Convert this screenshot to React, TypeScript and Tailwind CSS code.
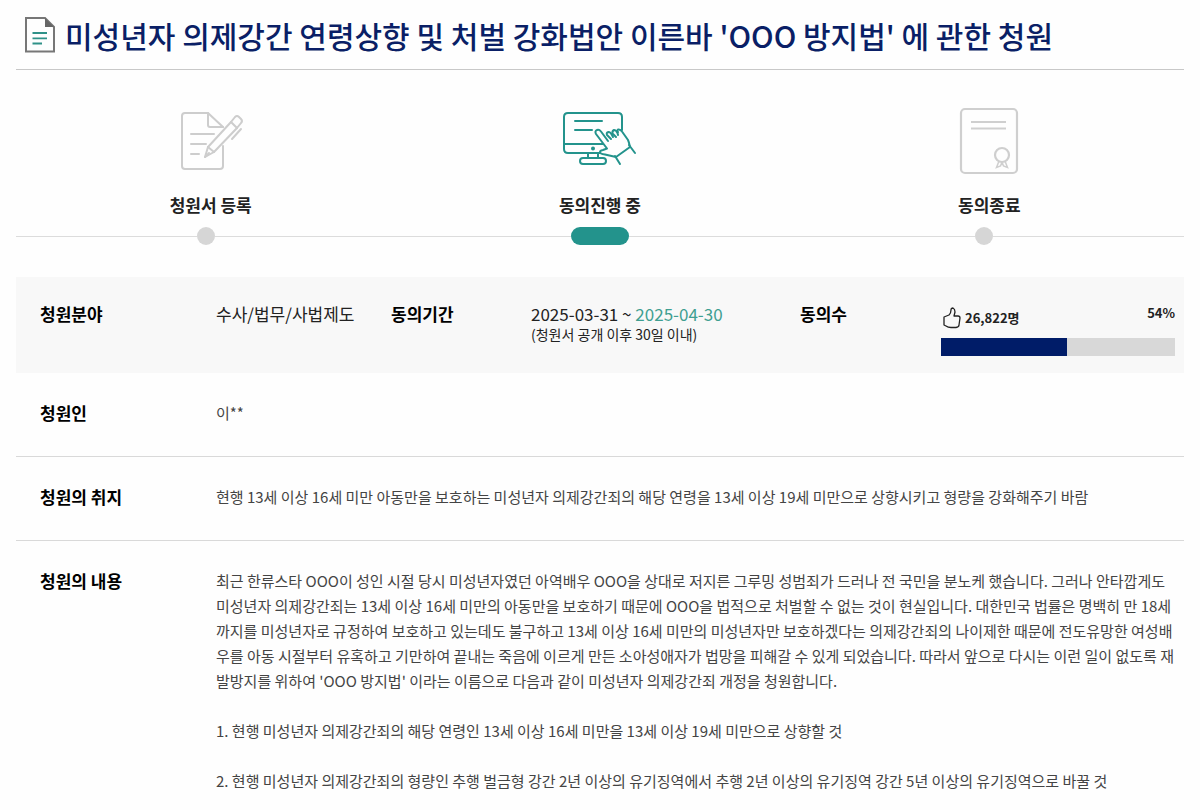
import type { ReactNode } from "react";

const PERCENT = 54;

function DocIcon() {
  return (
    <svg width="30" height="36" viewBox="0 0 30 36" fill="none" className="shrink-0" aria-hidden="true">
      <path d="M1 1H20L29 10V34.500H1Z" stroke="#777" strokeWidth="2" />
      <path d="M20 1L29 10H20Z" fill="#666" />
      <path d="M7.500 16H22M7.500 21.300H22M7.500 26.500H17" stroke="#2f9188" strokeWidth="1.800" />
    </svg>
  );
}

function WriteIcon() {
  return (
    <svg width="66" height="64" viewBox="0 0 66 64" fill="none" stroke="#cdcdcd" strokeWidth="2" strokeLinecap="round" strokeLinejoin="round" aria-hidden="true">
      <path d="M45 18L30 4H7Q4 4 4 7V57Q4 60 7 60H42Q45 60 45 57V37" />
      <path d="M30 4V16Q30 18 32 18H45" />
      <path d="M13 25H36M13 35H28M13 45H21" />
      <path d="M27 48L30 38L53 13L57 8Q59 6 61 8L63 10Q65 12 63 14L59 19L36 43Z" />
      <path d="M30 38L36 43M53 13L59 19M63 20L54 30M27 48L31 44" />
    </svg>
  );
}

function AgreeIcon() {
  return (
    <svg width="76" height="64" viewBox="0 0 76 64" fill="none" stroke="#23938c" strokeWidth="2" strokeLinecap="round" strokeLinejoin="round" aria-hidden="true">
      <path d="M38 44H6Q2 44 2 40V8Q2 4 6 4H56Q60 4 60 8V21" />
      <path d="M2 35H41M13 12H40M13 21H30" />
      <circle cx="31" cy="39.500" r="1" fill="#23938c" />
      <path d="M26 44V49M36 44V49" />
      <rect x="18" y="49" width="26" height="6" rx="3" />
      <path d="M54 48L43 45.500Q38 45 38 43Q38 41.500 41 41L45 39.500L34 25Q32.500 22 35 21Q37 20 39 22.500L46 32" />
      <path d="M49 30L45 26Q44 23.500 46.500 23Q48.500 23 50 26L51 28" />
      <path d="M54 28L50.500 24.500Q50 22 52 21Q54 21 55.500 24L56 26" />
      <path d="M56 23Q54.500 21.500 56 20.500Q58.500 20 60 22.500L66 31Q67 33 68 38L54 48" />
      <path d="M67 36L73 44M53 47L58 55" />
    </svg>
  );
}

function CertificateIcon() {
  return (
    <svg width="60" height="68" viewBox="0 0 60 68" fill="none" stroke="#cfcfcf" strokeWidth="2.200" aria-hidden="true">
      <rect x="2" y="2" width="56" height="64" rx="4" />
      <path d="M12 15H47M12 21.500H47" />
      <circle cx="43" cy="48" r="7" />
      <path d="M40 54L37.500 60.500L41.500 59L43 55M46 54L48.500 60.500L44.500 59L43 55" strokeWidth="1.500" />
    </svg>
  );
}

type StepProps = {
  label: string;
  icon: ReactNode;
  active?: boolean;
};

function Step({ label, icon, active }: StepProps) {
  return (
    <li className="flex flex-1 flex-col items-center">
      <div className="flex h-[70px] items-center justify-center">{icon}</div>
      <p className="mt-[17px] text-[17px] leading-6 font-semibold text-[#222]">{label}</p>
      <div className="mt-2.5 flex h-[18px] w-full items-center">
        <span className="h-px flex-1 bg-[#dcdcdc]" />
        {active ? (
          <span className="h-[18px] w-[58px] rounded-full bg-[#23938c]" />
        ) : (
          <>
            <span className="size-[18px] rounded-full bg-[#d6d6d6]" />
            <span className="h-px w-2.5 bg-[#dcdcdc]" />
          </>
        )}
        <span className="h-px flex-1 bg-[#dcdcdc]" />
      </div>
    </li>
  );
}

function Row({ label, children }: { label: string; children: ReactNode }) {
  return (
    <div className="grid grid-cols-[176px_1fr] border-b border-[#d9d9d9] pt-[27px] pr-2 pb-[31px] pl-6 last:border-b-0">
      <dt className="text-[17px] leading-[25px] font-semibold text-black">{label}</dt>
      <dd className="text-[15px] leading-[25px] text-[#444]">{children}</dd>
    </div>
  );
}

export default function App() {
  return (
    <main className="min-h-screen bg-[#fefefe] px-4 font-['Noto_Sans_CJK_KR','Noto_Sans_KR',sans-serif]">
      <header className="flex h-[70px] items-center gap-2.5 border-b border-[#c8c8c8] pl-[9px]">
        <DocIcon />
        <h1 className="text-3xl leading-10 font-medium text-[#0a1f66]">
          미성년자 의제강간 연령상향 및 처벌 강화법안 이른바 'OOO 방지법' 에 관한 청원
        </h1>
      </header>

      <ol className="flex pt-9">
        <Step label="청원서 등록" icon={<WriteIcon />} />
        <Step label="동의진행 중" icon={<AgreeIcon />} active />
        <Step label="동의종료" icon={<CertificateIcon />} />
      </ol>

      <dl className="mt-8 grid min-h-24 grid-cols-[176fr_175fr_140fr_269fr_141fr_234fr] bg-[#f8f8f8] pt-6 pr-[9px] pb-4 pl-6 text-[17px] leading-[25px] text-[#222]">
        <dt className="font-semibold text-black">청원분야</dt>
        <dd>수사/법무/사법제도</dd>
        <dt className="font-semibold text-black">동의기간</dt>
        <dd>
          2025-03-31 ~ <span className="text-[#3f9f91]">2025-04-30</span>
          <p className="text-sm leading-4">(청원서 공개 이후 30일 이내)</p>
        </dd>
        <dt className="font-semibold text-black">동의수</dt>
        <dd>
          <div className="flex justify-between text-[13px] leading-6 font-semibold">
            <span className="flex items-center gap-1 pt-[5px] pl-0.5">
              <svg width="18" height="22" viewBox="0 0 18 22" fill="none" stroke="#222" strokeWidth="1.300" strokeLinejoin="round" aria-hidden="true">
                <path d="M1 10L6 8Q8 6 8 3Q8 1 10 1Q12 2 12 5L11 9H15Q17 9 17 11L16 18Q16 20 13 20.500H8Q5 20.500 3 19L1 18Z" />
              </svg>
              26,822명
            </span>
            <span>{PERCENT}%</span>
          </div>
          <div className="mt-2 h-[18px] bg-[#d8d8d8]">
            <div className="h-full bg-[#001c68]" style={{ width: `${PERCENT}%` }} />
          </div>
        </dd>
      </dl>

      <dl>
        <Row label="청원인">이**</Row>
        <Row label="청원의 취지">
          현행 13세 이상 16세 미만 아동만을 보호하는 미성년자 의제강간죄의 해당 연령을 13세 이상 19세 미만으로 상향시키고 형량을 강화해주기 바람
        </Row>
        <Row label="청원의 내용">
          <p>
            최근 한류스타 OOO이 성인 시절 당시 미성년자였던 아역배우 OOO을 상대로 저지른 그루밍 성범죄가 드러나 전 국민을 분노케 했습니다. 그러나 안타깝게도 미성년자 의제강간죄는 13세 이상 16세 미만의 아동만을 보호하기 때문에 OOO을 법적으로 처벌할 수 없는 것이 현실입니다. 대한민국 법률은 명백히 만 18세까지를 미성년자로 규정하여 보호하고 있는데도 불구하고 13세 이상 16세 미만의 미성년자만 보호하겠다는 의제강간죄의 나이제한 때문에 전도유망한 여성배우를 아동 시절부터 유혹하고 기만하여 끝내는 죽음에 이르게 만든 소아성애자가 법망을 피해갈 수 있게 되었습니다. 따라서 앞으로 다시는 이런 일이 없도록 재발방지를 위하여 'OOO 방지법' 이라는 이름으로 다음과 같이 미성년자 의제강간죄 개정을 청원합니다.
          </p>
          <p className="mt-[25px]">1. 현행 미성년자 의제강간죄의 해당 연령인 13세 이상 16세 미만을 13세 이상 19세 미만으로 상향할 것</p>
          <p className="mt-[25px]">
            2. 현행 미성년자 의제강간죄의 형량인 추행 벌금형 강간 2년 이상의 유기징역에서 추행 2년 이상의 유기징역 강간 5년 이상의 유기징역으로 바꿀 것
          </p>
        </Row>
      </dl>
    </main>
  );
}
